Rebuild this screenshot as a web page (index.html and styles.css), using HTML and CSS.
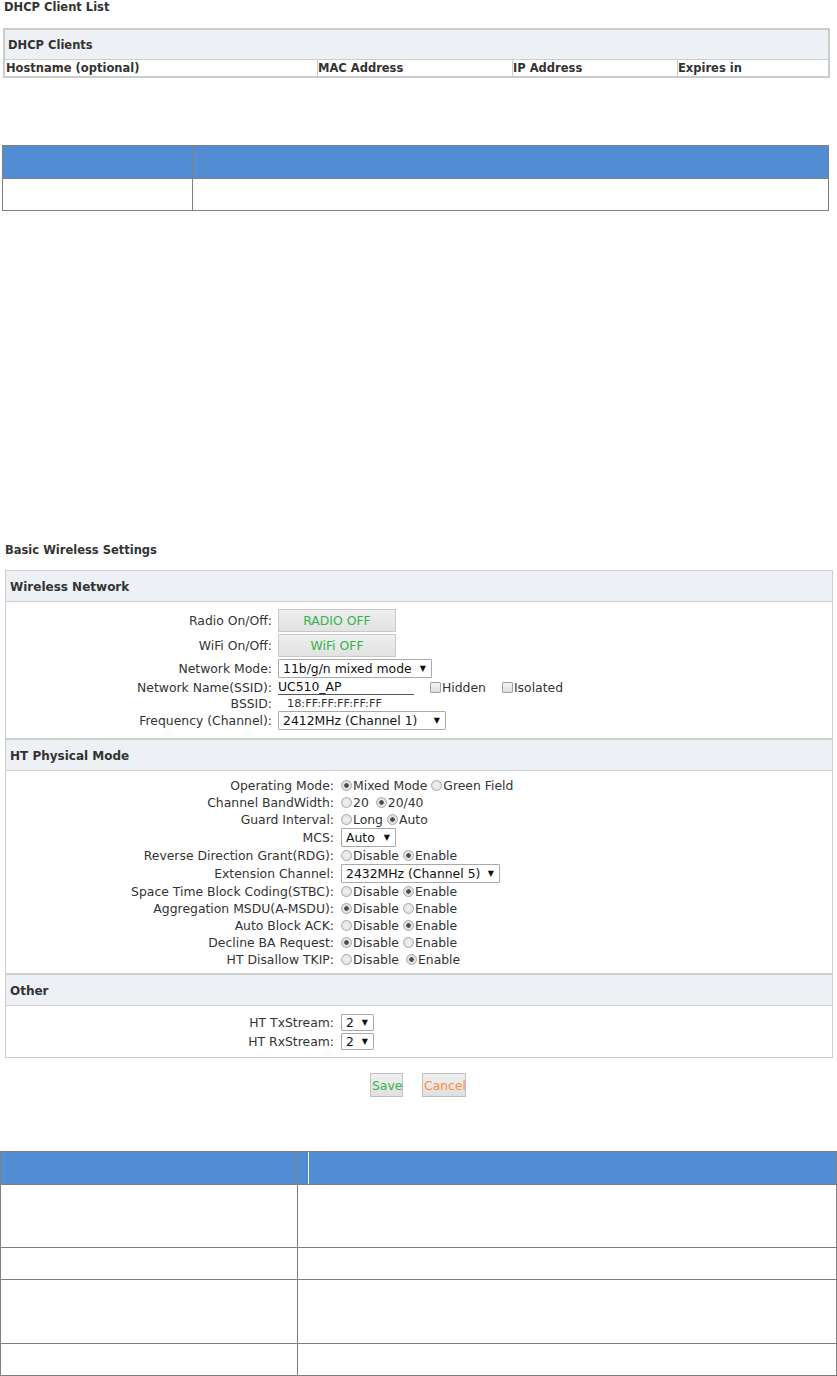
FILE: index.html
```html
<!DOCTYPE html>
<html>
<head>
<meta charset="utf-8">
<title>Wireless</title>
<link rel="stylesheet" href="styles.css">
</head>
<body>
<div class="page-title">DHCP Client List</div>
<table class="dhcp">
  <colgroup><col class="k1"><col class="k2"><col class="k3"><col class="k4"></colgroup>
  <tr><th colspan="4" class="dhcp-head">DHCP Clients</th></tr>
  <tr class="cols">
    <td class="c1">Hostname (optional)</td>
    <td>MAC Address</td>
    <td>IP Address</td>
    <td>Expires in</td>
  </tr>
</table>

<table class="blue small">
  <colgroup><col class="s1"><col></colgroup>
  <tr class="bh"><th></th><th></th></tr>
  <tr class="br"><td></td><td></td></tr>
</table>

<div class="page-title t2">Basic Wireless Settings</div>

<div class="wbox">
  <section class="sec">
    <div class="sec-head">Wireless Network</div>
    <div class="form f1">
      <div class="lbl">Radio On/Off:</div>
      <div class="ctl"><button class="toggle">RADIO OFF</button></div>
      <div class="lbl">WiFi On/Off:</div>
      <div class="ctl"><button class="toggle">WiFi OFF</button></div>
      <div class="lbl">Network Mode:</div>
      <div class="ctl"><span class="sel w-mode"><span>11b/g/n mixed mode</span><span class="arr">&#9660;</span></span></div>
      <div class="lbl">Network Name(SSID):</div>
      <div class="ctl"><span class="ssid">UC510_AP</span><label class="chk-l first"><input type="checkbox" class="cb">Hidden</label><label class="chk-l second"><input type="checkbox" class="cb">Isolated</label></div>
      <div class="lbl">BSSID:</div>
      <div class="ctl sm"><span class="bssid">18:FF:FF:FF:FF:FF</span></div>
      <div class="lbl">Frequency (Channel):</div>
      <div class="ctl"><span class="sel w-freq"><span>2412MHz (Channel 1)</span><span class="arr">&#9660;</span></span></div>
    </div>
  </section>

  <section class="sec">
    <div class="sec-head">HT Physical Mode</div>
    <div class="form f2">
      <div class="lbl">Operating Mode:</div>
      <div class="ctl"><label class="opt"><input type="radio" name="om" class="rd" checked>Mixed Mode</label><label class="opt"><input type="radio" name="om" class="rd">Green Field</label></div>
      <div class="lbl">Channel BandWidth:</div>
      <div class="ctl"><label class="opt wide"><input type="radio" name="bw" class="rd">20</label><label class="opt"><input type="radio" name="bw" class="rd" checked>20/40</label></div>
      <div class="lbl">Guard Interval:</div>
      <div class="ctl"><label class="opt"><input type="radio" name="gi" class="rd">Long</label><label class="opt"><input type="radio" name="gi" class="rd" checked>Auto</label></div>
      <div class="lbl">MCS:</div>
      <div class="ctl"><span class="sel w-mcs"><span>Auto</span><span class="arr">&#9660;</span></span></div>
      <div class="lbl">Reverse Direction Grant(RDG):</div>
      <div class="ctl"><label class="opt"><input type="radio" name="rdg" class="rd">Disable</label><label class="opt"><input type="radio" name="rdg" class="rd" checked>Enable</label></div>
      <div class="lbl">Extension Channel:</div>
      <div class="ctl"><span class="sel w-ext"><span>2432MHz (Channel 5)</span><span class="arr">&#9660;</span></span></div>
      <div class="lbl">Space Time Block Coding(STBC):</div>
      <div class="ctl"><label class="opt"><input type="radio" name="stbc" class="rd">Disable</label><label class="opt"><input type="radio" name="stbc" class="rd" checked>Enable</label></div>
      <div class="lbl">Aggregation MSDU(A-MSDU):</div>
      <div class="ctl"><label class="opt"><input type="radio" name="am" class="rd" checked>Disable</label><label class="opt"><input type="radio" name="am" class="rd">Enable</label></div>
      <div class="lbl">Auto Block ACK:</div>
      <div class="ctl"><label class="opt"><input type="radio" name="aba" class="rd">Disable</label><label class="opt"><input type="radio" name="aba" class="rd" checked>Enable</label></div>
      <div class="lbl">Decline BA Request:</div>
      <div class="ctl"><label class="opt"><input type="radio" name="dba" class="rd" checked>Disable</label><label class="opt"><input type="radio" name="dba" class="rd">Enable</label></div>
      <div class="lbl">HT Disallow TKIP:</div>
      <div class="ctl"><label class="opt wide"><input type="radio" name="tk" class="rd">Disable</label><label class="opt"><input type="radio" name="tk" class="rd" checked>Enable</label></div>
    </div>
  </section>

  <section class="sec">
    <div class="sec-head">Other</div>
    <div class="form f3">
      <div class="lbl">HT TxStream:</div>
      <div class="ctl"><span class="sel w-str"><span>2</span><span class="arr">&#9660;</span></span></div>
      <div class="lbl">HT RxStream:</div>
      <div class="ctl"><span class="sel w-str"><span>2</span><span class="arr">&#9660;</span></span></div>
    </div>
  </section>
</div>

<div class="actions">
  <button class="act save">Save</button>
  <button class="act cancel">Cancel</button>
</div>

<table class="blue big">
  <colgroup><col class="g1"><col></colgroup>
  <tr class="bh"><th></th><th class="g2"><div class="mark"></div></th></tr>
  <tr class="tall t1"><td></td><td></td></tr>
  <tr class="short"><td></td><td></td></tr>
  <tr class="tall"><td></td><td></td></tr>
  <tr class="short"><td></td><td></td></tr>
</table>
</body>
</html>
```

FILE: styles.css
```css
html, body {
  margin: 0;
  padding: 0;
  background: #ffffff;
}
body {
  font-family: "DejaVu Sans", Verdana, sans-serif;
  font-size: 12.4px;
  color: #333333;
}

.page-title {
  font-weight: bold;
  font-size: 11.5px;
  line-height: 15px;
  height: 14px;
  padding-left: 4px;
  color: #333333;
}
.page-title.t2 {
  margin-top: 332px;
  padding-left: 5px;
}

/* DHCP table */
.dhcp {
  margin: 14px 0 0 3px;
  width: 827px;
  border-collapse: separate;
  border-spacing: 1px;
  border: 1px solid #cccccc;
  background: #cccccc;
  table-layout: fixed;
}
.dhcp .k1 { width: 312px; }
.dhcp .k2 { width: 194px; }
.dhcp .k3 { width: 164px; }
.dhcp th, .dhcp td {
  padding: 0;
  font-size: 11.5px;
  font-weight: bold;
  text-align: left;
}
.dhcp-head {
  height: 29px;
  background: #edf1f5;
  padding-left: 3px !important;
}
.dhcp .cols td {
  background: #ffffff;
  height: 16px;
  line-height: 16px;
}
.dhcp .cols .c1 { padding-left: 1px; }

/* blue tables */
.blue {
  border-collapse: collapse;
  table-layout: fixed;
}
.blue th, .blue td {
  border: 1px solid #808080;
  padding: 0;
}
.blue .bh th {
  background: #528cd3;
  height: 32px;
}
.blue.small {
  margin: 67px 0 0 2px;
  width: 827px;
}
.blue.small .s1 { width: 190px; }
.blue.small .br td { height: 31px; }

.blue.big {
  margin: 54px 0 0 0;
  width: 837px;
}
.blue.big .g1 { width: 297px; }
.blue.big .g2 { padding-left: 10px; }
.blue.big .mark {
  border-left: 1px solid #ffffff;
  height: 32px;
}
.blue.big .tall td { height: 63px; }
.blue.big .tall.t1 td { height: 62px; }
.blue.big .short td { height: 31px; }

/* wireless box */
.wbox {
  margin: 13px 0 0 5px;
  width: 828px;
  border: 1px solid #cfcfcf;
  box-sizing: border-box;
}
.sec + .sec {
  border-top: 2px solid #cfcfcf;
}
.sec-head {
  height: 30px;
  line-height: 32px;
  background: #edf1f5;
  border-bottom: 1px solid #cfcfcf;
  font-weight: bold;
  font-size: 12px;
  padding-left: 4px;
  overflow: hidden;
}
.form {
  display: grid;
  align-items: center;
}
.f1 {
  grid-template-columns: 268px 1fr;
  column-gap: 4px;
  grid-template-rows: 25px 25px 20px 18px 14px 21px;
  padding: 6px 0 7px;
}
.f2 {
  grid-template-columns: 333px 1fr;
  column-gap: 2px;
  grid-template-rows: 17px 17px 17px 19px 17px 19px 17px 17px 17px 17px 17px;
  padding: 6px 0 5px;
}
.f3 {
  grid-template-columns: 333px 1fr;
  column-gap: 2px;
  grid-template-rows: 19px 19px;
  padding: 7px 0 6px;
}
.lbl {
  text-align: right;
  padding-right: 5px;
  white-space: nowrap;
}
.f1 .lbl { padding-right: 2px; }
.ctl {
  display: flex;
  align-items: center;
  white-space: nowrap;
}
.sm { font-size: 11.3px; }

.toggle {
  width: 118px;
  height: 23px;
  border: 1px solid #c8c8c8;
  background: linear-gradient(#eeeeee, #e2e2e2);
  color: #33b24a;
  font-family: "DejaVu Sans", Verdana, sans-serif;
  font-size: 12.4px;
  padding: 0;
  margin: 0;
}

.sel {
  display: inline-flex;
  align-items: center;
  justify-content: space-between;
  box-sizing: border-box;
  height: 19px;
  border: 1px solid #a9a9a9;
  border-radius: 1px;
  background: #ffffff;
  padding: 0 5px 0 4px;
  color: #111111;
  font-size: 12.4px;
}
.sel .arr { font-size: 8px; color: #111111; }
.w-mode { width: 154px; }
.w-freq { width: 168px; }
.w-mcs { width: 55px; }
.w-ext { width: 159px; }
.w-str { width: 33px; height: 17px; }

.ssid {
  display: inline-block;
  width: 136px;
  border-bottom: 1px solid #555555;
  line-height: 15px;
  color: #111111;
}
.chk-l { display: inline-flex; align-items: center; }
.chk-l.first { margin-left: 16px; }
.chk-l.second { margin-left: 16px; }
.cb {
  appearance: none;
  -webkit-appearance: none;
  width: 11px;
  height: 11px;
  margin: 0 1px 0 0;
  border: 1px solid #a0a0a0;
  border-radius: 1px;
  background: linear-gradient(#f4f4f4, #dedede);
  box-sizing: border-box;
}
.bssid { padding-left: 9px; color: #333333; }

.opt {
  display: inline-flex;
  align-items: center;
  margin-right: 4px;
}
.opt.wide { margin-right: 7px; }
.rd {
  appearance: none;
  -webkit-appearance: none;
  width: 11px;
  height: 11px;
  margin: 0 1px 0 0;
  border: 1px solid #a8a8a8;
  border-radius: 50%;
  background: radial-gradient(circle, #f2f2f2 0, #dcdcdc 100%);
  box-sizing: border-box;
}
.rd:checked {
  background: radial-gradient(circle, #444444 0, #555555 2px, #e6e6e6 2.6px, #d8d8d8 100%);
}

.actions {
  display: flex;
  justify-content: center;
  gap: 19px;
  margin-top: 15px;
  padding-right: 1px;
}
.act {
  height: 24px;
  border: 1px solid #c0c0c0;
  background: linear-gradient(#f0f0f0, #e0e0e0);
  font-family: "DejaVu Sans", Verdana, sans-serif;
  font-size: 12.4px;
  padding: 0 1px;
  margin: 0;
}
.save { color: #33b24a; width: 33px; }
.cancel { color: #ff8c3a; width: 44px; }
```
